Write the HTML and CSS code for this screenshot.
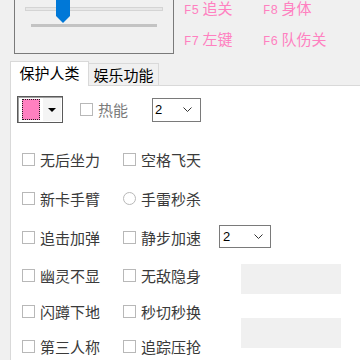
FILE: index.html
```html
<!DOCTYPE html>
<html lang="zh">
<head>
<meta charset="utf-8">
<link rel="stylesheet" href="styles.css">
</head>
<body>
<div class="top">
  <div class="slider-box">
    <svg class="slider" width="158" height="53" viewBox="0 0 158 53">
      <rect x="10.5" y="7.5" width="137" height="3" fill="#e7e7e7" stroke="#d4d4d4"/>
      <rect x="16" y="24" width="126" height="3" fill="#c3c3c3"/>
      <path d="M41 0 H55 V16 L48 23 L41 16 Z" fill="#0078d7"/>
    </svg>
  </div>
  <div class="hotkeys">
    <div class="hk"><span class="fk">F5</span> 追关</div>
    <div class="hk"><span class="fk">F8</span> 身体</div>
    <div class="hk"><span class="fk">F7</span> 左键</div>
    <div class="hk"><span class="fk">F6</span> 队伤关</div>
  </div>
</div>
<div class="tabs">
  <div class="tab active">保护人类</div>
  <div class="tab">娱乐功能</div>
</div>
<div class="panel">
  <div class="row1">
    <div class="combo">
      <div class="swatch-wrap"><div class="swatch"></div></div>
      <div class="drop"><span class="tri"></span></div>
    </div>
    <label class="chk disabled hot"><span class="box"></span>热能</label>
    <div class="select s1"><span class="val">2</span>
      <svg class="chev" width="9" height="5" viewBox="0 0 9 5"><path d="M0.5 0.5 L4.5 4.5 L8.5 0.5" fill="none" stroke="#333" stroke-width="1"/></svg>
    </div>
  </div>
  <div class="grid">
    <label class="chk"><span class="box"></span>无后坐力</label>
    <label class="chk"><span class="box"></span>空格飞天</label>
    <span></span>

    <label class="chk"><span class="box"></span>新卡手臂</label>
    <label class="chk"><span class="box radio"></span>手雷秒杀</label>
    <span></span>

    <label class="chk"><span class="box"></span>追击加弹</label>
    <label class="chk"><span class="box"></span>静步加速</label>
    <div class="select s2"><span class="val">2</span>
      <svg class="chev" width="9" height="5" viewBox="0 0 9 5"><path d="M0.5 0.5 L4.5 4.5 L8.5 0.5" fill="none" stroke="#333" stroke-width="1"/></svg>
    </div>

    <label class="chk"><span class="box"></span>幽灵不显</label>
    <label class="chk"><span class="box"></span>无敌隐身</label>
    <div class="greybox g1"></div>

    <label class="chk"><span class="box"></span>闪蹲下地</label>
    <label class="chk"><span class="box"></span>秒切秒换</label>
    <div class="greybox g2"></div>

    <label class="chk"><span class="box"></span>第三人称</label>
    <label class="chk"><span class="box"></span>追踪压抢</label>
  </div>
</div>
</body>
</html>
```
FILE: styles.css
```css
html, body {
  margin: 0;
  padding: 0;
}
body {
  width: 360px;
  height: 360px;
  overflow: hidden;
  background: #f0f0f0;
  font-family: "Noto Sans CJK SC", "Noto Sans", sans-serif;
  color: #000;
}
.top {
  display: flex;
  align-items: flex-start;
  height: 54px;
}
.slider-box {
  margin-left: 14px;
  width: 160px;
  height: 54px;
  box-sizing: border-box;
  border: 1px solid #7a7a7a;
  border-top: none;
}
.slider {
  display: block;
}
.hotkeys {
  margin-left: 10px;
  display: grid;
  grid-template-columns: 79px 80px;
  grid-auto-rows: 15px;
  row-gap: 16px;
  color: #ff80c0;
  font-size: 15px;
  line-height: 15px;
}
.hk {
  white-space: nowrap;
}
.fk {
  font-family: "Liberation Mono", monospace;
  font-size: 12.5px;
}
.tabs {
  display: flex;
  align-items: flex-end;
  margin: 7px 0 0 10px;
  font-size: 15px;
}
.tab {
  box-sizing: border-box;
  width: 70px;
  height: 22px;
  line-height: 21px;
  text-align: center;
  border: 1px solid #d9d9d9;
  border-left: none;
  border-bottom: none;
  background: #f0f0f0;
  white-space: nowrap;
}
.tab.active {
  width: 79px;
  height: 25px;
  line-height: 22px;
  border-left: 1px solid #d9d9d9;
  background: #fff;
  margin-bottom: -1px;
  position: relative;
  z-index: 1;
}
.panel {
  margin-left: 10px;
  width: 350px;
  height: 275px;
  overflow: hidden;
  box-sizing: border-box;
  background: #fff;
  border-top: 1px solid #d9d9d9;
  border-left: 1px solid #d9d9d9;
  padding: 10px 0 0 6px;
}
.row1 {
  display: flex;
  align-items: center;
  height: 27px;
}
.combo {
  display: flex;
  box-sizing: border-box;
  width: 46px;
  height: 27px;
  border: 1px solid #5a5a5a;
  box-shadow: inset 1px 1px 0 #a0a0a0;
  background: #fff;
}
.swatch-wrap {
  width: 25px;
  padding: 2px 0 0 4px;
  box-sizing: border-box;
}
.swatch {
  width: 18px;
  height: 21px;
  box-sizing: border-box;
  background: #ff80c0;
  border: 1px dotted #222;
}
.drop {
  flex: 1;
  display: flex;
  align-items: center;
  justify-content: center;
  background: #f4f4f4;
  margin: 1px 1px 1px 0;
}
.tri {
  width: 0;
  height: 0;
  border-left: 4px solid transparent;
  border-right: 4px solid transparent;
  border-top: 4px solid #000;
}
.chk {
  display: flex;
  align-items: center;
  gap: 5px;
  font-size: 15px;
  line-height: 20px;
  color: #3a3a3a;
  white-space: nowrap;
}
.chk.disabled {
  color: #7a7a7a;
}
.hot {
  margin-left: 17px;
}
.box {
  width: 13px;
  height: 13px;
  box-sizing: border-box;
  border: 1px solid #b8b8b8;
  background: #fff;
  flex: none;
}
.box.radio {
  border-radius: 50%;
}
.select {
  box-sizing: border-box;
  display: flex;
  align-items: center;
  justify-content: space-between;
  border: 1px solid #7a7a7a;
  background: #fff;
  font-family: "Liberation Sans", sans-serif;
  font-size: 13px;
  color: #000;
}
.s1 {
  width: 49px;
  height: 24px;
  margin-left: 24px;
  padding: 0 8px 0 2px;
}
.s2 {
  width: 52px;
  height: 23px;
  margin-top: -3px;
  padding: 0 7px 0 3px;
}
.chev {
  display: block;
}
.grid {
  display: grid;
  grid-template-columns: 101px 96px 140px;
  grid-template-rows: 39px 39px 39px 37px 35px 35px;
  align-items: center;
  margin: 17px 0 0 5px;
}
.greybox {
  width: 100px;
  height: 30px;
  background: #f0f0f0;
  margin-left: 22px;
}
.g1 {
  grid-column: 3;
  grid-row: 4;
  align-self: end;
}
.g2 {
  grid-column: 3;
  grid-row: 5 / 7;
  align-self: start;
  margin-top: 24px;
}
```
